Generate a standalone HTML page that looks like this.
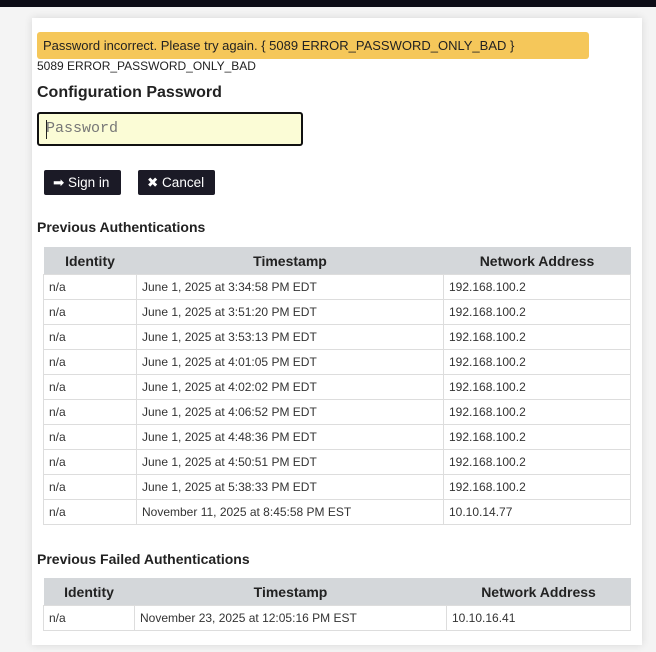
<!DOCTYPE html><html><head><style>
body{margin:0;width:656px;height:652px;background:#f4f4f4;font-family:"Liberation Sans",sans-serif;color:#222;position:relative;overflow:hidden}
.top{position:absolute;left:0;top:0;width:656px;height:7px;background:#0d0d17}
.panel{position:absolute;left:32px;top:18px;width:610px;height:627px;background:#fff;box-shadow:0 0 8px rgba(0,0,0,.12)}
.alert{position:absolute;left:37px;top:32px;width:552px;height:27px;background:#f5c75a;border-radius:3px;font-size:13px;line-height:27px;padding-left:6px;box-sizing:border-box;color:#222}
.t{position:absolute;left:37px}
.in{position:absolute;left:37px;top:112px;width:266px;height:34px;box-sizing:border-box;border:2px solid #111;border-radius:3px;background:#fbfcd6;font-family:"Liberation Mono",monospace;font-size:15px;color:#777;line-height:30px;padding-left:7px}
.in:before{content:"";position:absolute;left:7px;top:6px;width:1px;height:19px;background:#222}
.btn{position:absolute;top:170px;height:25px;background:#1b1a26;color:#fff;font-size:13.5px;line-height:25px;border-radius:2px;box-sizing:border-box;padding-left:9px}
table{position:absolute;left:43px;border-collapse:collapse;font-size:12px;width:588px;table-layout:fixed}
th{background:#d4d7da;font-size:14px;height:27px;padding:0;font-weight:bold}
td{border:1px solid #ddd;height:24px;padding:0 0 0 5px;color:#333}
</style></head><body>
<div class="top"></div><div class="panel"></div>
<div class="alert">Password incorrect. Please try again. { 5089 ERROR_PASSWORD_ONLY_BAD }</div>
<div class="t" style="top:59px;font-size:12px">5089 ERROR_PASSWORD_ONLY_BAD</div>
<div class="t" style="top:84px;font-size:16px;font-weight:bold">Configuration Password</div>
<div class="in">Password</div>
<div class="btn" style="left:44px;width:77px">➡ Sign in</div>
<div class="btn" style="left:138px;width:77px">✖ Cancel</div>
<div class="t" style="top:219px;font-size:14px;font-weight:bold">Previous Authentications</div>
<table style="top:247px"><colgroup><col style="width:93px"><col style="width:307px"><col></colgroup><tr><th>Identity</th><th>Timestamp</th><th>Network Address</th></tr>
<tr><td>n/a</td><td>June 1, 2025 at 3:34:58 PM EDT</td><td>192.168.100.2</td></tr>
<tr><td>n/a</td><td>June 1, 2025 at 3:51:20 PM EDT</td><td>192.168.100.2</td></tr>
<tr><td>n/a</td><td>June 1, 2025 at 3:53:13 PM EDT</td><td>192.168.100.2</td></tr>
<tr><td>n/a</td><td>June 1, 2025 at 4:01:05 PM EDT</td><td>192.168.100.2</td></tr>
<tr><td>n/a</td><td>June 1, 2025 at 4:02:02 PM EDT</td><td>192.168.100.2</td></tr>
<tr><td>n/a</td><td>June 1, 2025 at 4:06:52 PM EDT</td><td>192.168.100.2</td></tr>
<tr><td>n/a</td><td>June 1, 2025 at 4:48:36 PM EDT</td><td>192.168.100.2</td></tr>
<tr><td>n/a</td><td>June 1, 2025 at 4:50:51 PM EDT</td><td>192.168.100.2</td></tr>
<tr><td>n/a</td><td>June 1, 2025 at 5:38:33 PM EDT</td><td>192.168.100.2</td></tr>
<tr><td>n/a</td><td>November 11, 2025 at 8:45:58 PM EST</td><td>10.10.14.77</td></tr>
</table>
<div class="t" style="top:551px;font-size:14px;font-weight:bold">Previous Failed Authentications</div>
<table style="top:578px"><colgroup><col style="width:91px"><col style="width:312px"><col></colgroup><tr><th>Identity</th><th>Timestamp</th><th>Network Address</th></tr>
<tr><td>n/a</td><td>November 23, 2025 at 12:05:16 PM EST</td><td>10.10.16.41</td></tr>
</table>
</body></html>
